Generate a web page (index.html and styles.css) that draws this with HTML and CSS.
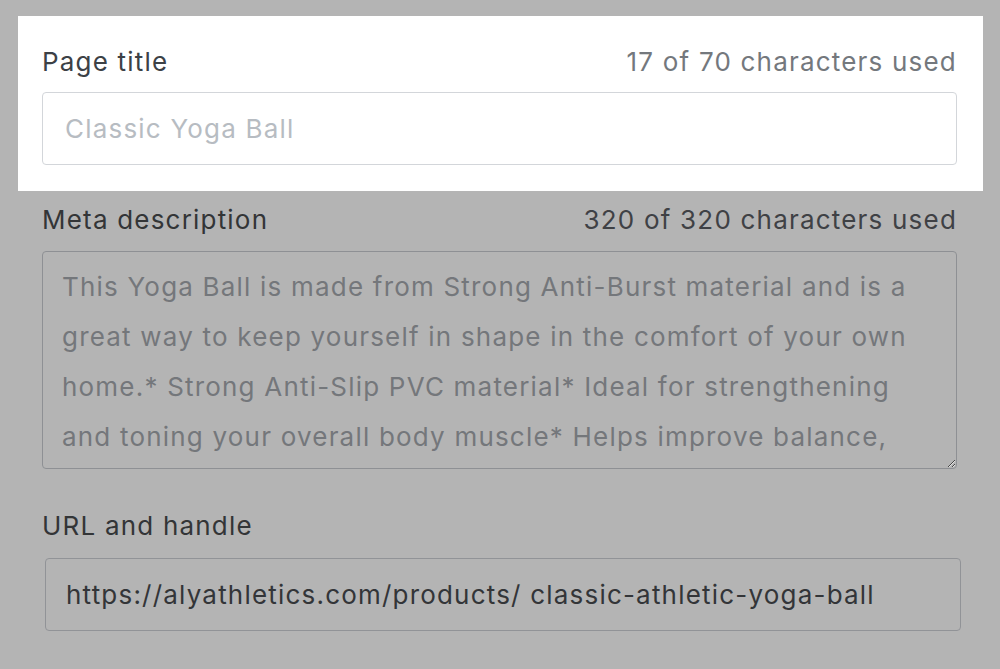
FILE: index.html
```html
<!DOCTYPE html>
<html lang="en">
<head>
    <meta charset="UTF-8">
    <meta name="viewport" content="width=device-width, initial-scale=1.0">
    <title>Search engine listing</title>
    <link rel="stylesheet" href="styles.css">
</head>
<body>
    <div class="seo-form">
        <!-- Focused field -->
        <div class="field field-focus">
            <div class="field-head">
                <label for="pageTitle">Page title</label>
                <span class="counter">17 of 70 characters used</span>
            </div>
            <input type="text" id="pageTitle" class="text-input" placeholder="Classic Yoga Ball">
        </div>

        <div class="field field-meta">
            <div class="field-head">
                <label for="metaDesc">Meta description</label>
                <span class="counter">320 of 320 characters used</span>
            </div>
            <textarea id="metaDesc" class="text-area">This Yoga Ball is made from Strong Anti-Burst material and is a great way to keep yourself in shape in the comfort of your own home.* Strong Anti-Slip PVC material* Ideal for strengthening and toning your overall body muscle* Helps improve balance, flexibility and posture* Great for yoga, pilates and stretching at home</textarea>
        </div>

        <div class="field field-url">
            <div class="field-head">
                <label for="urlHandle">URL and handle</label>
            </div>
            <input type="text" id="urlHandle" class="text-input url-input" value="https://alyathletics.com/products/ classic-athletic-yoga-ball">
        </div>
    </div>
</body>
</html>
```

FILE: styles.css
```css
body {
    margin: 0;
    background-color: #b4b4b4;
    font-family: Inter, "Liberation Sans", sans-serif;
    letter-spacing: 1.2px;
}
.seo-form {
    padding: 16px 17px 0 18px;
}
.field {
    padding: 0 26px 0 24px;
}
.field-head {
    display: flex;
    justify-content: space-between;
    align-items: baseline;
    height: 32px;
    line-height: 32px;
    font-size: 26px;
}
.field-head label {
    color: #333537;
}
.counter {
    color: #3f4145;
}
.text-input {
    display: block;
    box-sizing: border-box;
    width: 100%;
    height: 73px;
    margin-top: 14px;
    padding: 0 20px 0 22px;
    font-family: inherit;
    font-size: 26px;
    letter-spacing: inherit;
    color: #333538;
    background-color: transparent;
    border: 1px solid #919397;
    border-radius: 4px;
}
.text-input::placeholder {
    color: #b7bcc2;
}
/* the highlighted block */
.field-focus {
    background-color: #ffffff;
    padding-top: 30px;
    padding-bottom: 26px;
}
.field-focus label {
    color: #3c4146;
}
.field-focus .counter {
    color: #74787d;
}
.field-focus .text-input {
    border-color: #d3d6da;
    background-color: #ffffff;
}
.field-meta {
    margin-top: 13px;
}
.text-area {
    display: block;
    box-sizing: border-box;
    width: 100%;
    height: 218px;
    margin-top: 15px;
    padding: 10px 30px 0 19px;
    font-family: inherit;
    font-size: 26px;
    letter-spacing: inherit;
    line-height: 50px;
    color: #74777b;
    background-color: transparent;
    border: 1px solid #8e9094;
    border-radius: 4px;
    overflow: hidden;
    resize: vertical;
}
.field-url {
    margin-top: 41px;
}
.url-input {
    width: calc(100% + 1px);
    margin: 16px 0 0 3px;
    padding-left: 20px;
}
```
